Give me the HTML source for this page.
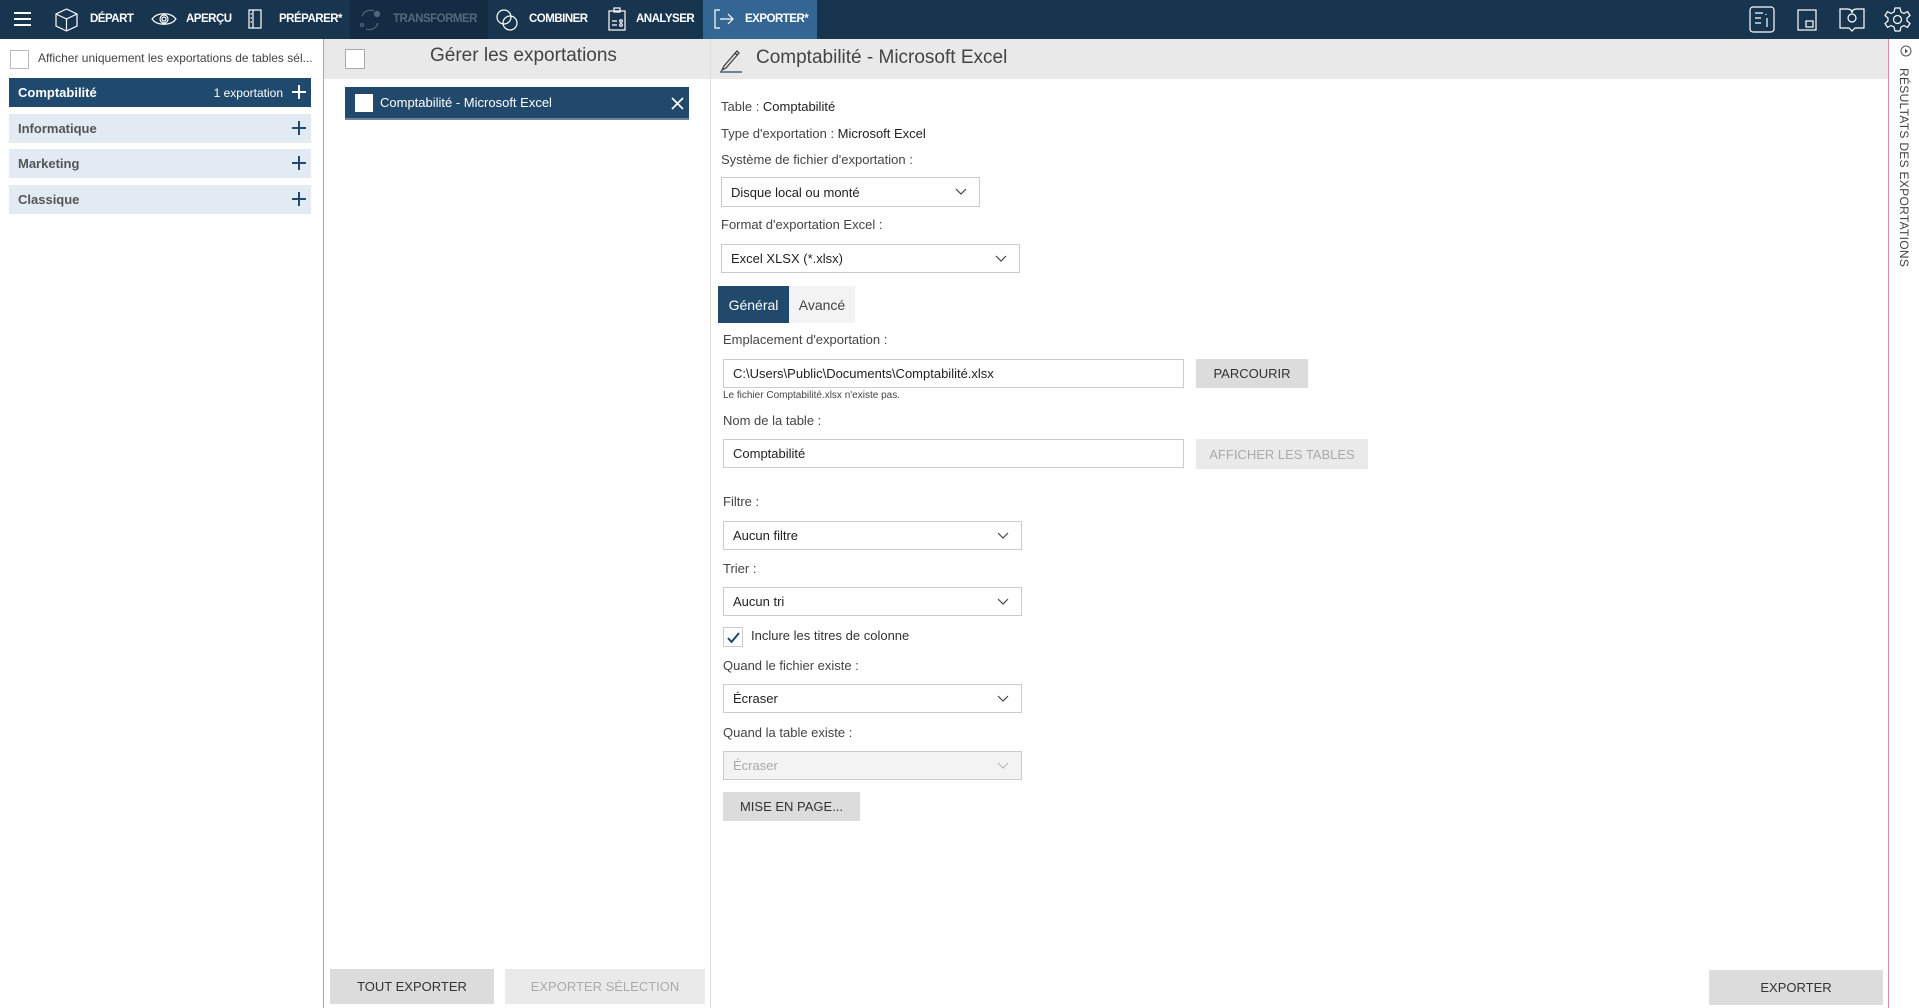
<!DOCTYPE html>
<html><head><meta charset="utf-8"><style>
*{box-sizing:border-box;margin:0;padding:0}
body{width:1919px;height:1008px;overflow:hidden;background:#fff;font-family:"Liberation Sans",sans-serif;color:#333;position:relative}
.a{position:absolute}
.nav{font-size:11.5px;font-weight:bold;color:#fff;letter-spacing:-0.5px;top:13px}
.lbl{font-size:13px;color:#444;left:721px}
.dd{border:1px solid #ccc;background:#fff;font-size:13px;color:#222;padding-left:9px;display:flex;align-items:center}
.dd svg{position:absolute;right:12px;top:50%;margin-top:-4px}
.btn{background:#dcdcdc;font-size:13px;color:#333;display:flex;align-items:center;justify-content:center}
.cat{left:9px;width:302px;height:29px;background:#e2eaf4;font-size:13px;font-weight:bold;color:#555;padding-left:9px;display:flex;align-items:center}
.plus{position:absolute;right:4px;top:6px}
</style></head><body>
<div class="a" style="left:0;top:0;width:1919px;height:39px;background:#18354f"></div>
<div class="a" style="left:350px;top:0;width:138px;height:39px;background:#142c43"></div>
<div class="a" style="left:703px;top:0;width:114px;height:39px;background:#336693"></div>
<svg class="a" style="left:14px;top:11px" width="18" height="16"><path d="M0 2H17M0 8H17M0 14H17" stroke="#fff" stroke-width="2"/></svg>
<svg class="a" style="left:55px;top:8px" width="23" height="24" fill="none" stroke="#fff" stroke-width="1.2"><path d="M11.5 1L22 6V18L11.5 23L1 18V6Z M1 6L11.5 11L22 6 M11.5 11V23"/></svg>
<div class="a nav" style="left:90px">DÉPART</div>
<svg class="a" style="left:151px;top:11px" width="26" height="16" fill="none" stroke="#fff" stroke-width="1.2"><path d="M1 8C6 1 20 1 25 8C20 15 6 15 1 8Z"/><circle cx="13" cy="8" r="4"/><circle cx="13" cy="8" r="2"/></svg>
<div class="a nav" style="left:186px">APERÇU</div>
<svg class="a" style="left:248px;top:9px" width="14" height="20" fill="none" stroke="#fff" stroke-width="1.2"><rect x="1" y="1" width="12" height="18"/><path d="M5 1V19M2.5 5H4M2.5 9H4M2.5 13H4"/></svg>
<div class="a nav" style="left:279px">PRÉPARER*</div>
<svg class="a" style="left:358px;top:8px" width="24" height="23" fill="none" stroke="#55687a" stroke-width="1.2"><path d="M4 8A9 9 0 0 1 16 3M20 15A9 9 0 0 1 8 21"/><circle cx="19" cy="6" r="2.5" fill="#55687a"/><circle cx="4" cy="17" r="1.5"/></svg>
<div class="a nav" style="left:393px;color:#55687a">TRANSFORMER</div>
<svg class="a" style="left:496px;top:9px" width="23" height="22" fill="none" stroke="#fff" stroke-width="1.2"><circle cx="8" cy="8" r="7"/><circle cx="14" cy="14" r="7"/></svg>
<div class="a nav" style="left:529px">COMBINER</div>
<svg class="a" style="left:608px;top:7px" width="18" height="24" fill="none" stroke="#fff" stroke-width="1.2"><rect x="1" y="4" width="16" height="19"/><rect x="6" y="1" width="6" height="4"/><path d="M4 14H9M4 18H9"/><circle cx="13" cy="14" r="1.3"/><circle cx="13" cy="18" r="1.3"/></svg>
<div class="a nav" style="left:636px">ANALYSER</div>
<svg class="a" style="left:714px;top:9px" width="20" height="20" fill="none" stroke="#fff" stroke-width="1.2"><path d="M6 1H1V19H6M6 10H19M14 5L19 10L14 15"/></svg>
<div class="a nav" style="left:745px">EXPORTER*</div>
<svg class="a" style="left:1749px;top:6px" width="26" height="27" fill="none" stroke="#fff" stroke-width="1.2"><rect x="1" y="1" width="24" height="25" rx="3"/><path d="M6 7H14M6 12H12M6 17H12M18 12V21M17 8V9"/></svg>
<svg class="a" style="left:1797px;top:9px" width="20" height="22" fill="none" stroke="#fff" stroke-width="1.2"><rect x="1" y="1" width="18" height="20"/><rect x="9" y="12" width="7" height="6"/></svg>
<svg class="a" style="left:1838px;top:6px" width="28" height="27" fill="none" stroke="#fff" stroke-width="1.2"><path d="M2 3H9Q14 3 14 7Q14 3 19 3H26V22H17L14 25L11 22H2Z"/><circle cx="14" cy="12" r="4"/></svg>
<svg class="a" style="left:1884px;top:6px" width="27" height="27" fill="none" stroke="#fff" stroke-width="1.2"><circle cx="13.5" cy="13.5" r="4"/><path d="M11 2H16L17 6L20 7.5L23.5 5.5L26 9.5L23 12V15L26 17.5L23.5 21.5L20 19.5L17 21L16 25H11L10 21L7 19.5L3.5 21.5L1 17.5L4 15V12L1 9.5L3.5 5.5L7 7.5L10 6Z"/></svg>

<div class="a" style="left:10px;top:50px;width:19px;height:19px;border:1px solid #bbb"></div>
<div class="a" style="left:38px;top:51px;font-size:12px;color:#444">Afficher uniquement les exportations de tables sél...</div>
<div class="a cat" style="top:78px;background:#1f4a6e;color:#fff">Comptabilité<span style="position:absolute;right:28px;font-weight:normal;font-size:12px">1 exportation</span><svg class="plus" width="16" height="16"><path d="M8 1V15M1 8H15" stroke="#fff" stroke-width="2"/></svg></div>
<div class="a cat" style="top:114px">Informatique<svg class="plus" width="16" height="16"><path d="M8 1V15M1 8H15" stroke="#1f4a6e" stroke-width="2"/></svg></div>
<div class="a cat" style="top:149px">Marketing<svg class="plus" width="16" height="16"><path d="M8 1V15M1 8H15" stroke="#1f4a6e" stroke-width="2"/></svg></div>
<div class="a cat" style="top:185px">Classique<svg class="plus" width="16" height="16"><path d="M8 1V15M1 8H15" stroke="#1f4a6e" stroke-width="2"/></svg></div>
<div class="a" style="left:323px;top:39px;width:1px;height:969px;background:#e88aa0"></div>

<div class="a" style="left:324px;top:39px;width:386px;height:40px;background:#e9e9e9"></div>
<div class="a" style="left:345px;top:49px;width:20px;height:20px;border:1px solid #aaa;background:#fff"></div>
<div class="a" style="left:430px;top:45px;font-size:19px;color:#444">Gérer les exportations</div>
<div class="a" style="left:345px;top:87px;width:344px;height:33px;background:#21496c;border-bottom:2px solid #6a86a0"></div>
<div class="a" style="left:355px;top:94px;width:18px;height:18px;background:#fff"></div>
<div class="a" style="left:380px;top:95px;font-size:13px;color:#fff">Comptabilité - Microsoft Excel</div>
<svg class="a" style="left:671px;top:97px" width="13" height="13"><path d="M1 1L12 12M12 1L1 12" stroke="#fff" stroke-width="1.6"/></svg>
<div class="a btn" style="left:330px;top:969px;width:164px;height:35px">TOUT EXPORTER</div>
<div class="a btn" style="left:505px;top:969px;width:200px;height:35px;background:#eaeaea;color:#aaa">EXPORTER SÉLECTION</div>
<div class="a" style="left:710px;top:39px;width:1px;height:969px;background:#ddd"></div>

<div class="a" style="left:711px;top:39px;width:1178px;height:40px;background:#e9e9e9"></div>
<svg class="a" style="left:719px;top:47px" width="24" height="26" fill="none" stroke="#444" stroke-width="1.3"><path d="M5 19L3 23L7 21L20 6L18 4Z M16 6L18 8"/><path d="M1 25H23" stroke="#1f4a6e"/></svg>
<div class="a" style="left:756px;top:47px;font-size:19px;color:#444">Comptabilité - Microsoft Excel</div>
<div class="a lbl" style="top:99px">Table : <span style="color:#222">Comptabilité</span></div>
<div class="a lbl" style="top:126px">Type d'exportation : <span style="color:#222">Microsoft Excel</span></div>
<div class="a lbl" style="top:152px">Système de fichier d'exportation :</div>
<div class="a dd" style="left:721px;top:177px;width:259px;height:30px">Disque local ou monté<svg width="12" height="8"><path d="M1 1L6 6L11 1" stroke="#444" fill="none" stroke-width="1.2"/></svg></div>
<div class="a lbl" style="top:217px">Format d'exportation Excel :</div>
<div class="a dd" style="left:721px;top:244px;width:299px;height:29px">Excel XLSX (*.xlsx)<svg width="12" height="8"><path d="M1 1L6 6L11 1" stroke="#444" fill="none" stroke-width="1.2"/></svg></div>
<div class="a" style="left:718px;top:286px;width:71px;height:37px;background:#21496c;color:#fff;font-size:14px;display:flex;align-items:center;justify-content:center">Général</div>
<div class="a" style="left:789px;top:286px;width:66px;height:37px;background:#f3f3f3;color:#444;font-size:14px;display:flex;align-items:center;justify-content:center">Avancé</div>
<div class="a lbl" style="top:332px;left:723px">Emplacement d'exportation :</div>
<div class="a dd" style="left:723px;top:359px;width:461px;height:29px">C:\Users\Public\Documents\Comptabilité.xlsx</div>
<div class="a btn" style="left:1196px;top:359px;width:112px;height:29px">PARCOURIR</div>
<div class="a" style="left:723px;top:390px;font-size:10px;color:#444">Le fichier Comptabilité.xlsx n'existe pas.</div>
<div class="a lbl" style="top:413px;left:723px">Nom de la table :</div>
<div class="a dd" style="left:723px;top:439px;width:461px;height:29px">Comptabilité</div>
<div class="a btn" style="left:1196px;top:439px;width:172px;height:30px;background:#eaeaea;color:#aaa">AFFICHER LES TABLES</div>
<div class="a lbl" style="top:494px;left:723px">Filtre :</div>
<div class="a dd" style="left:723px;top:521px;width:299px;height:29px">Aucun filtre<svg width="12" height="8"><path d="M1 1L6 6L11 1" stroke="#444" fill="none" stroke-width="1.2"/></svg></div>
<div class="a lbl" style="top:561px;left:723px">Trier :</div>
<div class="a dd" style="left:723px;top:587px;width:299px;height:29px">Aucun tri<svg width="12" height="8"><path d="M1 1L6 6L11 1" stroke="#444" fill="none" stroke-width="1.2"/></svg></div>
<div class="a" style="left:723px;top:627px;width:20px;height:20px;border:1px solid #ccc"></div>
<svg class="a" style="left:727px;top:632px" width="13" height="11"><path d="M1 6L4.5 10L12 1" stroke="#1f4a6e" stroke-width="2" fill="none"/></svg>
<div class="a" style="left:751px;top:628px;font-size:13px;color:#333">Inclure les titres de colonne</div>
<div class="a lbl" style="top:658px;left:723px">Quand le fichier existe :</div>
<div class="a dd" style="left:723px;top:684px;width:299px;height:29px">Écraser<svg width="12" height="8"><path d="M1 1L6 6L11 1" stroke="#444" fill="none" stroke-width="1.2"/></svg></div>
<div class="a lbl" style="top:725px;left:723px">Quand la table existe :</div>
<div class="a dd" style="left:723px;top:751px;width:299px;height:29px;background:#f3f3f3;color:#aaa">Écraser<svg width="12" height="8"><path d="M1 1L6 6L11 1" stroke="#bbb" fill="none" stroke-width="1.2"/></svg></div>
<div class="a btn" style="left:723px;top:792px;width:137px;height:29px">MISE EN PAGE...</div>
<div class="a btn" style="left:1709px;top:970px;width:174px;height:35px">EXPORTER</div>

<div class="a" style="left:1888px;top:39px;width:1px;height:969px;background:#e88aa0"></div>
<svg class="a" style="left:1900px;top:45px" width="12" height="12"><circle cx="6" cy="6" r="5" fill="none" stroke="#555"/><path d="M5 3.5L8 6L5 8.5Z" fill="#555"/></svg>
<div class="a" style="left:1897px;top:68px;writing-mode:vertical-rl;font-size:12px;color:#444;letter-spacing:0.3px">RÉSULTATS DES EXPORTATIONS</div>
</body></html>
